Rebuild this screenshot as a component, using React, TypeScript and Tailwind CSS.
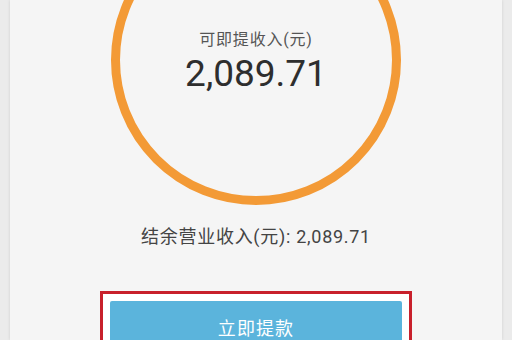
export default function App() {
  return (
    <div className="w-[512px] h-[340px] overflow-hidden bg-[#ebebeb] font-['Roboto','Noto_Sans_CJK_SC',sans-serif]">
      <div className="mx-[10px] h-full bg-[#f5f5f5] shadow-[0_0_3px_rgba(0,0,0,0.12)] flex flex-col items-center">
        <div className="mt-[-85px] w-[290px] h-[290px] shrink-0 rounded-full border-[9px] border-[#f39a36] flex flex-col items-center pt-[106px]">
          <div className="text-[16px] leading-[20px] text-[#555555] tracking-[0.05em]">可即提收入(元)</div>
          <div className="mt-[2px] text-[37px] leading-[44px] text-[#2e2e2e]">2,089.71</div>
        </div>
        <div className="mt-[20px] text-[18px] leading-[24px] text-[#444444] tracking-[0.04em]">
          结余营业收入(元): 2,089.71
        </div>
        <div className="mt-[42px] w-[312px] shrink-0 border-[3px] border-[#c8202b] bg-white p-[7px]">
          <div className="h-[54px] rounded-[2px] bg-[#5bb4dc] text-white text-[18px] tracking-[0.06em] flex items-center justify-center">
            立即提款
          </div>
        </div>
      </div>
    </div>
  );
}
